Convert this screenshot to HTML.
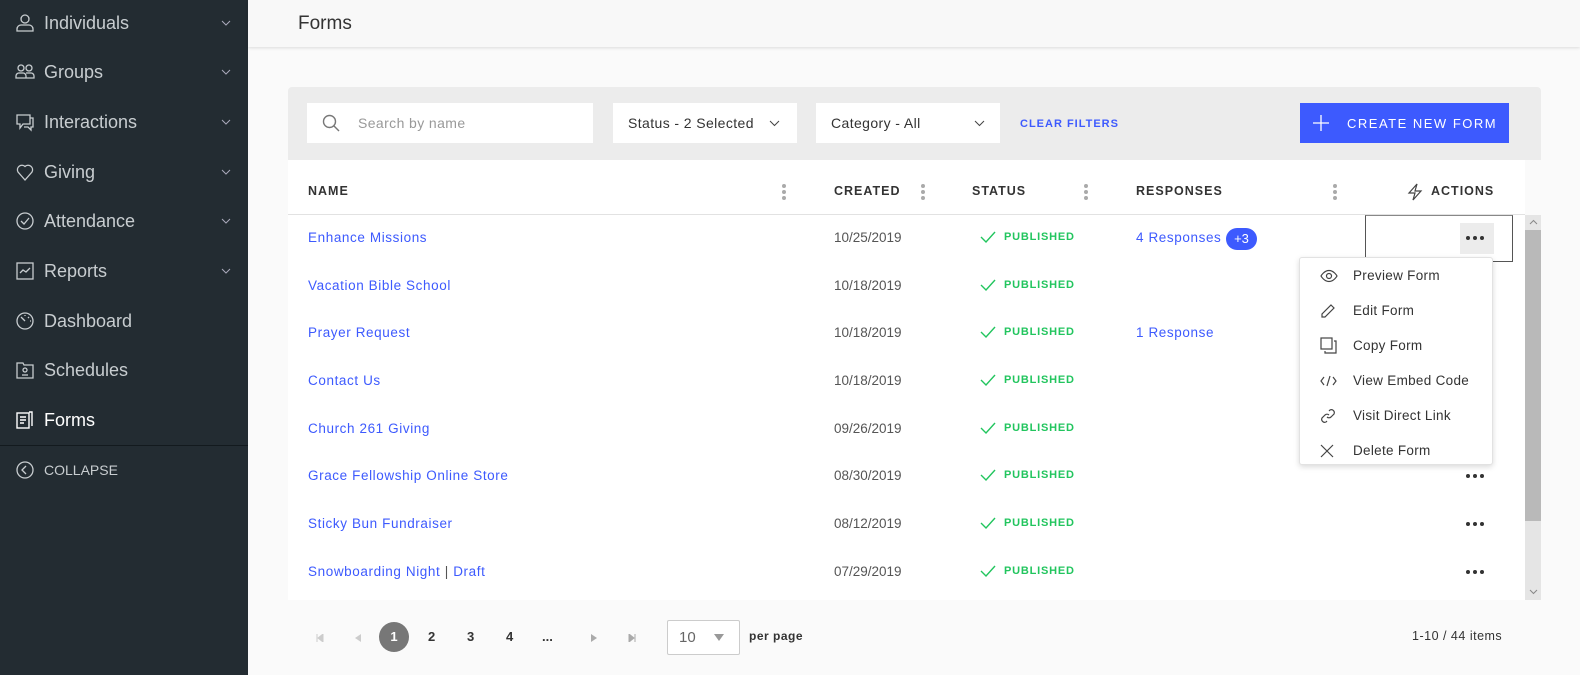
<!DOCTYPE html>
<html><head><meta charset="utf-8"><style>
*{box-sizing:border-box;margin:0;padding:0}
body{width:1580px;height:675px;overflow:hidden;background:#fafafa;font-family:"Liberation Sans",sans-serif;position:relative}
.a{position:absolute}
#sb{left:0;top:0;width:248px;height:675px;background:#232c32}
.si{position:absolute;left:0;width:248px;height:40px;color:#c8cdd0;font-size:18px;display:flex;align-items:center}
.si svg.ic{position:absolute;left:15px}
.si span{position:absolute;left:44px}
.si .ch{position:absolute;left:221px}
#hdr{left:248px;top:0;width:1332px;height:47px;background:#f8f8f8;box-shadow:0 1px 3px rgba(0,0,0,.12)}
#tb{left:288px;top:87px;width:1253px;height:73px;background:#ececec;border-radius:4px 4px 0 0}
.box{position:absolute;background:#fff;height:40px;top:103px;font-size:14px;color:#333;display:flex;align-items:center}
#tbl{left:288px;top:160px;width:1237px;height:440px;background:#fff}
.th{position:absolute;top:184px;font-size:12.5px;font-weight:bold;letter-spacing:1px;color:#333}
.kb{position:absolute;top:184px;width:4px}
.kb i{display:block;width:4px;height:4px;border-radius:2px;background:#aaa;margin-bottom:2px}
.nm{position:absolute;left:308px;font-size:13.5px;color:#3d5afe;letter-spacing:.6px}
.dt{position:absolute;left:834px;font-size:13.5px;color:#555}
.st{position:absolute;left:980px;font-size:11px;font-weight:bold;letter-spacing:.8px;color:#22c55e;display:flex;align-items:center}
.st svg{margin-right:8px}
.dots{position:absolute;left:1466px;width:20px;height:5px;display:flex;gap:3px}
.dots i{flex:none;width:4px;height:4px;border-radius:2px;background:#333}
#menu{left:1299px;top:257px;width:194px;height:208px;background:#fff;border:1px solid #e2e2e2;border-radius:3px;box-shadow:0 2px 6px rgba(0,0,0,.15)}
.mi{position:absolute;left:0;width:194px;height:35px;font-size:13.5px;color:#333;display:flex;align-items:center;letter-spacing:.3px}
.mi span{position:absolute;left:53px}
.mi svg{position:absolute;left:20px}
.pg{position:absolute;top:629px;font-size:13px;font-weight:bold;color:#333}
</style></head><body>
<div id="sb" class="a">
<div class="si" style="top:3px"><svg class="ic" width="20" height="20" viewBox="0 0 20 20" fill="none" stroke="#c8cdd0" stroke-width="1.3"><circle cx="10" cy="6" r="4"/><path d="M2 18v-2a4 4 0 0 1 4-4h8a4 4 0 0 1 4 4v2z"/></svg><span>Individuals</span><svg class="ch" width="10" height="6" viewBox="0 0 10 6"><path d="M1 1l4 4 4-4" stroke="#aab" fill="none"/></svg></div>
<div class="si" style="top:52px"><svg class="ic" width="20" height="20" viewBox="0 0 20 20" fill="none" stroke="#c8cdd0" stroke-width="1.3"><circle cx="6" cy="6" r="3"/><circle cx="14" cy="6" r="3"/><path d="M1 16v-2a3 3 0 0 1 3-3h4a3 3 0 0 1 3 3v2zM11 11h5a3 3 0 0 1 3 3v2h-8"/></svg><span>Groups</span><svg class="ch" width="10" height="6" viewBox="0 0 10 6"><path d="M1 1l4 4 4-4" stroke="#aab" fill="none"/></svg></div>
<div class="si" style="top:102px"><svg class="ic" width="20" height="20" viewBox="0 0 20 20" fill="none" stroke="#c8cdd0" stroke-width="1.3"><path d="M2 3h13v9H8l-3 4v-4H2zM15 6h3v9h-2v3l-3-3H9"/></svg><span>Interactions</span><svg class="ch" width="10" height="6" viewBox="0 0 10 6"><path d="M1 1l4 4 4-4" stroke="#aab" fill="none"/></svg></div>
<div class="si" style="top:152px"><svg class="ic" width="20" height="20" viewBox="0 0 20 20" fill="none" stroke="#c8cdd0" stroke-width="1.3"><path d="M10 18L3 10a4.5 4.5 0 0 1 7-5.5A4.5 4.5 0 0 1 17 10z"/></svg><span>Giving</span><svg class="ch" width="10" height="6" viewBox="0 0 10 6"><path d="M1 1l4 4 4-4" stroke="#aab" fill="none"/></svg></div>
<div class="si" style="top:201px"><svg class="ic" width="20" height="20" viewBox="0 0 20 20" fill="none" stroke="#c8cdd0" stroke-width="1.3"><circle cx="10" cy="10" r="8"/><path d="M6 10l3 3 5-6"/></svg><span>Attendance</span><svg class="ch" width="10" height="6" viewBox="0 0 10 6"><path d="M1 1l4 4 4-4" stroke="#aab" fill="none"/></svg></div>
<div class="si" style="top:251px"><svg class="ic" width="20" height="20" viewBox="0 0 20 20" fill="none" stroke="#c8cdd0" stroke-width="1.3"><rect x="2" y="2" width="16" height="16"/><path d="M5 12l3-3 3 2 4-4"/></svg><span>Reports</span><svg class="ch" width="10" height="6" viewBox="0 0 10 6"><path d="M1 1l4 4 4-4" stroke="#aab" fill="none"/></svg></div>
<div class="si" style="top:301px"><svg class="ic" width="20" height="20" viewBox="0 0 20 20" fill="none" stroke="#c8cdd0" stroke-width="1.3"><circle cx="10" cy="10" r="8"/><path d="M10 10L6 6M10 4v1M14 6l-1 1M16 10h-1"/></svg><span>Dashboard</span></div>
<div class="si" style="top:350px"><svg class="ic" width="20" height="20" viewBox="0 0 20 20" fill="none" stroke="#c8cdd0" stroke-width="1.3"><path d="M2 3h6l1 2h9v13H2z"/><circle cx="10" cy="10" r="2"/><path d="M7 15h6"/></svg><span>Schedules</span></div>
<div class="si" style="top:400px;color:#fff"><svg class="ic" width="20" height="20" viewBox="0 0 20 20" fill="none" stroke="#fff" stroke-width="1.4"><rect x="2" y="3" width="12" height="15"/><path d="M14 2h3v14M5 7h6M5 10h6M5 13h4"/></svg><span>Forms</span></div>
<div class="a" style="left:0;top:445px;width:248px;height:1px;background:#131a1e"></div>
<div class="si" style="top:450px;font-size:14px"><svg class="ic" width="20" height="20" viewBox="0 0 20 20" fill="none" stroke="#c8cdd0" stroke-width="1.3"><circle cx="10" cy="10" r="8"/><path d="M11 6l-4 4 4 4"/></svg><span>COLLAPSE</span></div>
</div>
<div id="hdr" class="a"><div class="a" style="left:50px;top:13px;font-size:19px;color:#333">Forms</div></div>
<div id="tb" class="a"></div>
<div class="box" style="left:307px;width:286px;color:#999"><svg style="position:absolute;left:15px" width="18" height="18" viewBox="0 0 18 18" fill="none" stroke="#777" stroke-width="1.4"><circle cx="7.5" cy="7.5" r="6"/><path d="M12 12l5 5"/></svg><span style="position:absolute;left:51px;letter-spacing:.4px">Search by name</span></div>
<div class="box" style="left:613px;width:184px"><span style="position:absolute;left:15px;letter-spacing:.4px">Status - 2 Selected</span><svg style="position:absolute;left:156px" width="11" height="7" viewBox="0 0 11 7"><path d="M1 1l4.5 4.5L10 1" stroke="#444" fill="none"/></svg></div>
<div class="box" style="left:816px;width:184px"><span style="position:absolute;left:15px;letter-spacing:.4px">Category - All</span><svg style="position:absolute;left:158px" width="11" height="7" viewBox="0 0 11 7"><path d="M1 1l4.5 4.5L10 1" stroke="#444" fill="none"/></svg></div>
<div class="a" style="left:1020px;top:118px;font-size:11px;font-weight:bold;letter-spacing:1px;color:#3d5afe">CLEAR FILTERS</div>
<div class="a" style="left:1300px;top:103px;width:209px;height:40px;background:#3d5afe;color:#fff;font-size:13px;letter-spacing:1.5px"><svg style="position:absolute;left:13px;top:12px" width="16" height="16" viewBox="0 0 16 16"><path d="M8 0v16M0 8h16" stroke="#fff" stroke-width="1.3"/></svg><span style="position:absolute;left:47px;top:13px">CREATE NEW FORM</span></div>
<div id="tbl" class="a"></div>
<div class="th" style="left:308px">NAME</div>
<div class="th" style="left:834px">CREATED</div>
<div class="th" style="left:972px">STATUS</div>
<div class="th" style="left:1136px">RESPONSES</div>
<div class="th" style="left:1431px">ACTIONS</div>
<svg class="a" style="left:1407px;top:183px" width="16" height="18" viewBox="0 0 16 18" fill="none" stroke="#444" stroke-width="1.2"><path d="M10 1L2 10h6l-2 7 8-9H8z"/></svg>
<div class="kb" style="left:782px"><i></i><i></i><i></i></div>
<div class="kb" style="left:921px"><i></i><i></i><i></i></div>
<div class="kb" style="left:1084px"><i></i><i></i><i></i></div>
<div class="kb" style="left:1333px"><i></i><i></i><i></i></div>
<div class="a" style="left:288px;top:214px;width:1237px;height:1px;background:#e2e2e2"></div>
<div class="nm" style="top:230px">Enhance Missions</div>
<div class="nm" style="top:278px">Vacation Bible School</div>
<div class="nm" style="top:325px">Prayer Request</div>
<div class="nm" style="top:373px">Contact Us</div>
<div class="nm" style="top:421px">Church 261 Giving</div>
<div class="nm" style="top:468px">Grace Fellowship Online Store</div>
<div class="nm" style="top:516px">Sticky Bun Fundraiser</div>
<div class="nm" style="top:564px">Snowboarding Night <span style="color:#555">|</span> Draft</div>
<div class="dt" style="top:230px">10/25/2019</div>
<div class="dt" style="top:278px">10/18/2019</div>
<div class="dt" style="top:325px">10/18/2019</div>
<div class="dt" style="top:373px">10/18/2019</div>
<div class="dt" style="top:421px">09/26/2019</div>
<div class="dt" style="top:468px">08/30/2019</div>
<div class="dt" style="top:516px">08/12/2019</div>
<div class="dt" style="top:564px">07/29/2019</div>
<div class="st" style="top:231px"><svg width="16" height="12" viewBox="0 0 16 12"><path d="M1 6l5 5L15 1" stroke="#22c55e" stroke-width="1.4" fill="none"/></svg>PUBLISHED</div>
<div class="st" style="top:279px"><svg width="16" height="12" viewBox="0 0 16 12"><path d="M1 6l5 5L15 1" stroke="#22c55e" stroke-width="1.4" fill="none"/></svg>PUBLISHED</div>
<div class="st" style="top:326px"><svg width="16" height="12" viewBox="0 0 16 12"><path d="M1 6l5 5L15 1" stroke="#22c55e" stroke-width="1.4" fill="none"/></svg>PUBLISHED</div>
<div class="st" style="top:374px"><svg width="16" height="12" viewBox="0 0 16 12"><path d="M1 6l5 5L15 1" stroke="#22c55e" stroke-width="1.4" fill="none"/></svg>PUBLISHED</div>
<div class="st" style="top:422px"><svg width="16" height="12" viewBox="0 0 16 12"><path d="M1 6l5 5L15 1" stroke="#22c55e" stroke-width="1.4" fill="none"/></svg>PUBLISHED</div>
<div class="st" style="top:469px"><svg width="16" height="12" viewBox="0 0 16 12"><path d="M1 6l5 5L15 1" stroke="#22c55e" stroke-width="1.4" fill="none"/></svg>PUBLISHED</div>
<div class="st" style="top:517px"><svg width="16" height="12" viewBox="0 0 16 12"><path d="M1 6l5 5L15 1" stroke="#22c55e" stroke-width="1.4" fill="none"/></svg>PUBLISHED</div>
<div class="st" style="top:565px"><svg width="16" height="12" viewBox="0 0 16 12"><path d="M1 6l5 5L15 1" stroke="#22c55e" stroke-width="1.4" fill="none"/></svg>PUBLISHED</div>
<div class="nm" style="left:1136px;top:230px">4 Responses</div>
<div class="a" style="left:1226px;top:228px;width:31px;height:22px;border-radius:11px;background:#3d5afe;color:#fff;font-size:13px;text-align:center;line-height:22px">+3</div>
<div class="nm" style="left:1136px;top:325px">1 Response</div>
<div class="a" style="left:1365px;top:215px;width:148px;height:47px;border:1px solid #555;border-top-color:#888"></div>
<div class="a" style="left:1460px;top:223px;width:34px;height:31px;background:#ececec"></div>
<div class="dots" style="top:236px"><i></i><i></i><i></i></div>
<div class="dots" style="top:474px"><i></i><i></i><i></i></div>
<div class="dots" style="top:522px"><i></i><i></i><i></i></div>
<div class="dots" style="top:570px"><i></i><i></i><i></i></div>
<div class="a" style="left:1525px;top:215px;width:16px;height:385px;background:#e5e5e5"></div>
<div class="a" style="left:1525px;top:230px;width:16px;height:291px;background:#b9b9b9"></div>
<svg class="a" style="left:1529px;top:219px" width="9" height="6" viewBox="0 0 9 6"><path d="M1 5l3.5-3.5L8 5" stroke="#888" fill="none"/></svg>
<svg class="a" style="left:1529px;top:589px" width="9" height="6" viewBox="0 0 9 6"><path d="M1 1l3.5 3.5L8 1" stroke="#888" fill="none"/></svg>
<div id="menu" class="a">
<div class="mi" style="top:0"><svg width="18" height="14" viewBox="0 0 18 14" fill="none" stroke="#444" stroke-width="1.2"><path d="M1 7s3-5.5 8-5.5S17 7 17 7s-3 5.5-8 5.5S1 7 1 7z"/><circle cx="9" cy="7" r="2.5"/></svg><span>Preview Form</span></div>
<div class="mi" style="top:35px"><svg width="16" height="16" viewBox="0 0 16 16" fill="none" stroke="#444" stroke-width="1.2"><path d="M11 2l3 3-9 9H2v-3z"/></svg><span>Edit Form</span></div>
<div class="mi" style="top:70px"><svg width="17" height="17" viewBox="0 0 17 17" fill="none" stroke="#444" stroke-width="1.2"><rect x="1" y="1" width="11" height="11"/><path d="M14 4h2v12H5v-2"/></svg><span>Copy Form</span></div>
<div class="mi" style="top:105px"><svg width="17" height="12" viewBox="0 0 17 12" fill="none" stroke="#444" stroke-width="1.2"><path d="M4 2L1 6l3 4M13 2l3 4-3 4M10 1L7 11"/></svg><span>View Embed Code</span></div>
<div class="mi" style="top:140px"><svg width="16" height="16" viewBox="0 0 16 16" fill="none" stroke="#444" stroke-width="1.2"><path d="M7 9a3 3 0 0 0 4 0l3-3a3 3 0 0 0-4-4l-1 1M9 7a3 3 0 0 0-4 0L2 10a3 3 0 0 0 4 4l1-1"/></svg><span>Visit Direct Link</span></div>
<div class="mi" style="top:175px"><svg width="14" height="14" viewBox="0 0 14 14" fill="none" stroke="#444" stroke-width="1.2"><path d="M1 1l12 12M13 1L1 13"/></svg><span>Delete Form</span></div>
</div>
<svg class="a" style="left:316px;top:634px" width="8" height="8" viewBox="0 0 8 8"><path d="M1 0v8M7 0v8L2 4z" stroke="#ccc" fill="#ccc"/></svg>
<svg class="a" style="left:355px;top:634px" width="6" height="8" viewBox="0 0 6 8"><path d="M6 0v8L0 4z" fill="#ccc"/></svg>
<div class="a" style="left:379px;top:622px;width:30px;height:30px;border-radius:15px;background:#777;color:#fff;font-size:13px;font-weight:bold;text-align:center;line-height:30px">1</div>
<div class="pg" style="left:428px">2</div>
<div class="pg" style="left:467px">3</div>
<div class="pg" style="left:506px">4</div>
<div class="pg" style="left:542px">...</div>
<svg class="a" style="left:591px;top:634px" width="6" height="8" viewBox="0 0 6 8"><path d="M0 0v8L6 4z" fill="#aaa"/></svg>
<svg class="a" style="left:628px;top:634px" width="8" height="8" viewBox="0 0 8 8"><path d="M7 0v8M1 0v8L6 4z" stroke="#aaa" fill="#aaa"/></svg>
<div class="a" style="left:667px;top:620px;width:73px;height:35px;border:1px solid #ccc;border-radius:2px;background:#fff;font-size:15px;color:#666"><span style="position:absolute;left:11px;top:8px">10</span><svg style="position:absolute;left:46px;top:13px" width="10" height="7" viewBox="0 0 10 7"><path d="M0 0h10L5 7z" fill="#999"/></svg></div>
<div class="a" style="left:749px;top:629px;font-size:12px;font-weight:bold;color:#333;letter-spacing:.5px">per page</div>
<div class="a" style="left:1412px;top:629px;font-size:12.5px;color:#333;letter-spacing:.5px">1-10 / 44 items</div>
</body></html>
